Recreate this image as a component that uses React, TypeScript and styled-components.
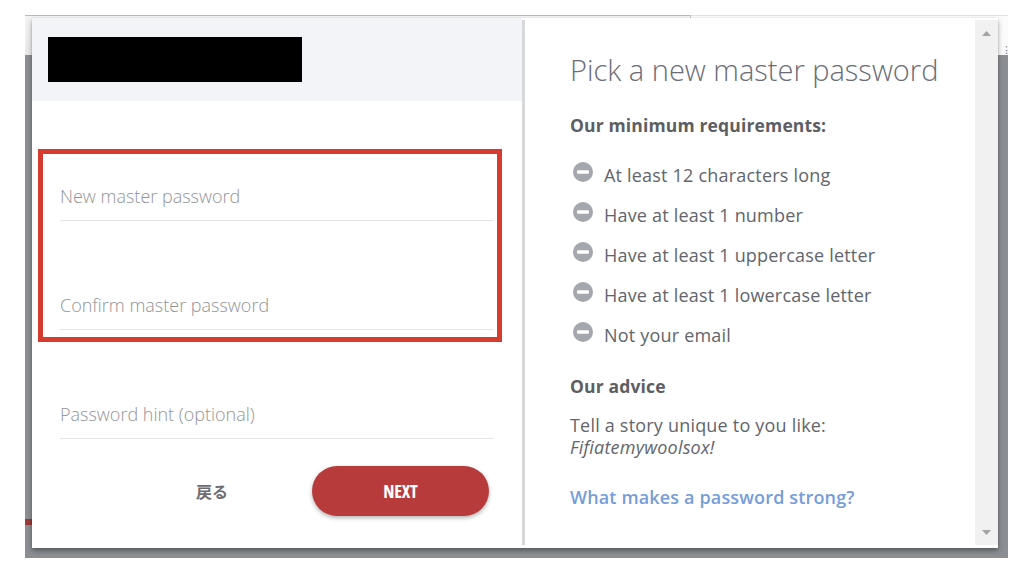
import React from "react";
import styled, { createGlobalStyle } from "styled-components";

const Global = createGlobalStyle`
  html, body { margin: 0; padding: 0; background: #ffffff; }
  body { font-family: "Open Sans", "Noto Sans", "Noto Sans CJK JP", sans-serif; }
  * { box-sizing: border-box; }
`;

const Page = styled.div`
  width: 1024px;
  height: 574px;
  padding: 15px 16px 16px 25px;
`;

const Frame = styled.div`
  position: relative;
  width: 983px;
  height: 543px;
  display: flex;
  flex-direction: column;
`;

const TopBand = styled.div`
  height: 40px;
  display: flex;
  background: #fafafa;
`;

const TabEdge = styled.div`
  width: 666px;
  border-top: 1px solid #b9b9b9;
  border-right: 1px solid #c9c9c9;
  border-bottom-right-radius: 6px;
  background: linear-gradient(#f4f4f4, #e9e9e9);
`;

const TabRest = styled.div`
  flex: 1;
  border-top: 1px solid #e2e2e2;
  background: #fbfbfb;
  display: flex;
  justify-content: flex-end;
  align-items: flex-end;
  color: #777;
  font-size: 11px;
  line-height: 11px;
`;

const Backdrop = styled.div`
  flex: 1;
  background: #8b8f93;
  position: relative;
`;

const RedMark = styled.div`
  position: absolute;
  left: 0;
  top: 464px;
  width: 7px;
  height: 6px;
  background: #9a3a3a;
`;

const Dialog = styled.div`
  position: absolute;
  left: 7px;
  top: 3px;
  width: 966px;
  height: 530px;
  background: #ffffff;
  display: flex;
  box-shadow: 0 3px 5px rgba(0, 0, 0, 0.35), 0 0 1px rgba(0, 0, 0, 0.2);
`;

const LeftPanel = styled.div`
  width: 490px;
  display: flex;
  flex-direction: column;
`;

const Header = styled.div`
  height: 83px;
  background: #f3f4f8;
  padding: 19px 0 0 16px;
`;

const Redacted = styled.div`
  width: 254px;
  height: 45px;
  background: #000000;
`;

const Form = styled.div`
  padding: 11px 28px 0 28px;
  display: flex;
  flex-direction: column;
`;

const FieldGroup = styled.div`
  position: relative;
`;

const Highlight = styled.div`
  position: absolute;
  left: -22px;
  top: 37px;
  width: 464px;
  height: 193px;
  border: 5px solid #d63b2f;
  pointer-events: none;
`;

const Field = styled.div`
  height: 109px;
  border-bottom: 1px solid #e4e5e8;
  display: flex;
  align-items: flex-end;
  padding-bottom: 13px;
`;

const Placeholder = styled.span`
  font-size: 18px;
  font-weight: 300;
  line-height: 22px;
  color: #939498;
`;

const Actions = styled.div`
  display: flex;
  justify-content: flex-end;
  align-items: center;
  gap: 84px;
  margin-top: 27px;
  padding-right: 5px;
`;

const BackLink = styled.span`
  font-family: "Noto Sans CJK JP", "Noto Sans", sans-serif;
  font-size: 16px;
  font-weight: 700;
  color: #6b6d72;
`;

const NextButton = styled.button`
  width: 177px;
  height: 50px;
  border: none;
  border-radius: 25px;
  background: #b83b3b;
  color: #ffffff;
  font-family: "Liberation Sans Narrow", "Open Sans", sans-serif;
  font-stretch: condensed;
  font-weight: 700;
  font-size: 18px;
  letter-spacing: -0.2px;
  box-shadow: 0 2px 4px rgba(0, 0, 0, 0.3);
`;

const Divider = styled.div`
  width: 3px;
  margin: 2px 0 3px;
  background: #d7d8da;
`;

const RightPanel = styled.div`
  flex: 1;
  padding: 34px 0 0 45px;
  display: flex;
  flex-direction: column;
  align-items: flex-start;
`;

const Title = styled.h1`
  margin: 0;
  font-size: 29px;
  font-weight: 300;
  line-height: 36px;
  color: #6a6d78;
`;

const SectionHeading = styled.h2<{ $mt: number }>`
  margin: ${(p) => p.$mt}px 0 0;
  font-size: 17.5px;
  font-weight: 700;
  letter-spacing: 0.15px;
  line-height: 24px;
  color: #5c5e64;
`;

const ReqList = styled.ul`
  list-style: none;
  margin: 18px 0 0;
  padding: 0;
`;

const ReqItem = styled.li`
  height: 40px;
  display: flex;
  align-items: center;
  gap: 11px;
  padding-left: 3px;
  font-size: 18px;
  letter-spacing: 0.2px;
  color: #62656d;
`;

const IconWrap = styled.span`
  display: flex;
  width: 20px;
  height: 20px;
  margin-top: -6px;
`;

const Advice = styled.p`
  margin: 16px 0 0;
  font-size: 18px;
  letter-spacing: 0.2px;
  line-height: 22px;
  color: #62656d;
`;

const Example = styled.em`
  display: block;
  font-style: italic;
`;

const HelpLink = styled.a`
  margin-top: 27px;
  font-size: 18px;
  font-weight: 600;
  letter-spacing: 0.15px;
  line-height: 24px;
  color: #759dd9;
  text-decoration: none;
`;

const Scrollbar = styled.div`
  width: 23px;
  margin: 2px 0 3px;
  background: #f1f1f1;
  display: flex;
  flex-direction: column;
  justify-content: space-between;
  align-items: center;
  padding: 11px 0 10px;
`;

const Arrow = ({ down }: { down?: boolean }) => (
  <svg width="9" height="5" viewBox="0 0 9 5">
    <path d={down ? "M0 0 H9 L4.5 5 Z" : "M0 5 H9 L4.5 0 Z"} fill="#a3a3a3" />
  </svg>
);

const MinusIcon = () => (
  <svg width="20" height="20" viewBox="0 0 20 20">
    <circle cx="10" cy="10" r="10" fill="#a4a7ae" />
    <rect x="4" y="8.3" width="12" height="3.4" rx="1" fill="#ffffff" />
  </svg>
);

const requirements = [
  "At least 12 characters long",
  "Have at least 1 number",
  "Have at least 1 uppercase letter",
  "Have at least 1 lowercase letter",
  "Not your email",
];

export default function App() {
  return (
    <>
      <Global />
      <Page>
        <Frame>
          <TopBand>
            <TabEdge />
            <TabRest>⁝</TabRest>
          </TopBand>
          <Backdrop>
            <RedMark />
          </Backdrop>
          <Dialog>
            <LeftPanel>
              <Header>
                <Redacted />
              </Header>
              <Form>
                <FieldGroup>
                  <Field>
                    <Placeholder>New master password</Placeholder>
                  </Field>
                  <Field>
                    <Placeholder>Confirm master password</Placeholder>
                  </Field>
                  <Highlight />
                </FieldGroup>
                <Field>
                  <Placeholder>Password hint (optional)</Placeholder>
                </Field>
                <Actions>
                  <BackLink>戻る</BackLink>
                  <NextButton>NEXT</NextButton>
                </Actions>
              </Form>
            </LeftPanel>
            <Divider />
            <RightPanel>
              <Title>Pick a new master password</Title>
              <SectionHeading $mt={25}>Our minimum requirements:</SectionHeading>
              <ReqList>
                {requirements.map((r) => (
                  <ReqItem key={r}>
                    <IconWrap>
                      <MinusIcon />
                    </IconWrap>
                    {r}
                  </ReqItem>
                ))}
              </ReqList>
              <SectionHeading $mt={19}>Our advice</SectionHeading>
              <Advice>
                Tell a story unique to you like:
                <Example>Fifiatemywoolsox!</Example>
              </Advice>
              <HelpLink href="#">What makes a password strong?</HelpLink>
            </RightPanel>
            <Scrollbar>
              <Arrow />
              <Arrow down />
            </Scrollbar>
          </Dialog>
        </Frame>
      </Page>
    </>
  );
}
